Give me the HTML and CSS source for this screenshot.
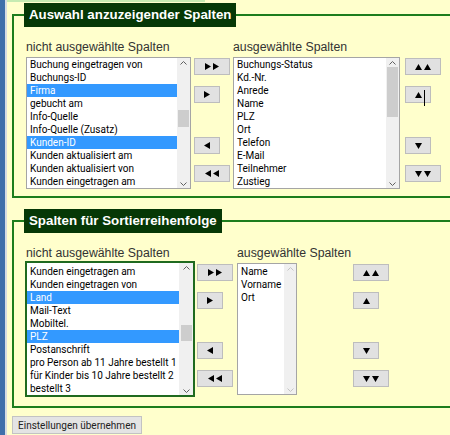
FILE: index.html
```html
<!DOCTYPE html>
<html>
<head>
<meta charset="utf-8">
<title>Spaltenauswahl</title>
<link rel="stylesheet" href="styles.css">
</head>
<body>
<div class="topband"></div>

<fieldset class="box">
	<legend>Auswahl anzuzeigender Spalten</legend>
	<div class="grid g1">
		<div class="lbl">nicht ausgewählte Spalten</div>
		<div></div>
		<div class="lbl">ausgewählte Spalten</div>
		<div></div>

		<div class="list l1">
			<div class="opts">
				<div class="opt">Buchung eingetragen von</div>
				<div class="opt">Buchungs-ID</div>
				<div class="opt sel">Firma</div>
				<div class="opt">gebucht am</div>
				<div class="opt">Info-Quelle</div>
				<div class="opt">Info-Quelle (Zusatz)</div>
				<div class="opt sel">Kunden-ID</div>
				<div class="opt">Kunden aktualisiert am</div>
				<div class="opt">Kunden aktualisiert von</div>
				<div class="opt">Kunden eingetragen am</div>
			</div>
			<div class="sb">
				<div class="arr"><svg width="7" height="4" viewBox="0 0 7 4"><polyline points="0.5,3.5 3.5,0.5 6.5,3.5"/></svg></div>
				<div class="track"><div class="thumb t1"></div></div>
				<div class="arr"><svg width="7" height="4" viewBox="0 0 7 4"><polyline points="0.5,0.5 3.5,3.5 6.5,0.5"/></svg></div>
			</div>
		</div>
		<div class="btns b1">
			<button class="btn d"><svg width="15" height="7" viewBox="0 0 15 7"><path d="M0 0L6 3.5L0 7ZM8 0L14 3.5L8 7Z"/></svg></button>
			<button class="btn s"><svg width="6" height="7" viewBox="0 0 6 7"><path d="M0 0L6 3.5L0 7Z"/></svg></button>
			<button class="btn s gap"><svg width="6" height="7" viewBox="0 0 6 7"><path d="M6 0L0 3.5L6 7Z"/></svg></button>
			<button class="btn d"><svg width="15" height="7" viewBox="0 0 15 7"><path d="M6 0L0 3.5L6 7ZM14 0L8 3.5L14 7Z"/></svg></button>
		</div>
		<div class="list l2">
			<div class="opts">
				<div class="opt">Buchungs-Status</div>
				<div class="opt">Kd.-Nr.</div>
				<div class="opt">Anrede</div>
				<div class="opt">Name</div>
				<div class="opt">PLZ</div>
				<div class="opt">Ort</div>
				<div class="opt">Telefon</div>
				<div class="opt">E-Mail</div>
				<div class="opt">Teilnehmer</div>
				<div class="opt">Zustieg</div>
			</div>
			<div class="sb">
				<div class="arr"><svg width="7" height="4" viewBox="0 0 7 4"><polyline points="0.5,3.5 3.5,0.5 6.5,3.5"/></svg></div>
				<div class="track"><div class="thumb t2"></div></div>
				<div class="arr"><svg width="7" height="4" viewBox="0 0 7 4"><polyline points="0.5,0.5 3.5,3.5 6.5,0.5"/></svg></div>
			</div>
		</div>
		<div class="btns b1">
			<button class="btn d"><svg width="16" height="6" viewBox="0 0 16 6"><path d="M0 6L3.5 0L7 6ZM9 6L12.5 0L16 6Z"/></svg></button>
			<button class="btn s"><svg width="7" height="6" viewBox="0 0 7 6"><path d="M0 6L3.5 0L7 6Z"/></svg></button>
			<button class="btn s gap"><svg width="7" height="6" viewBox="0 0 7 6"><path d="M0 0L3.5 6L7 0Z"/></svg></button>
			<button class="btn d"><svg width="16" height="6" viewBox="0 0 16 6"><path d="M0 0L3.5 6L7 0ZM9 0L12.5 6L16 0Z"/></svg></button>
		</div>
	</div>
</fieldset>

<fieldset class="box second">
	<legend>Spalten für Sortierreihenfolge</legend>
	<div class="grid g2">
		<div class="lbl">nicht ausgewählte Spalten</div>
		<div></div>
		<div class="lbl">ausgewählte Spalten</div>
		<div></div>

		<div class="list l3">
			<div class="opts">
				<div class="opt">Kunden eingetragen am</div>
				<div class="opt">Kunden eingetragen von</div>
				<div class="opt sel">Land</div>
				<div class="opt">Mail-Text</div>
				<div class="opt">Mobiltel.</div>
				<div class="opt sel">PLZ</div>
				<div class="opt">Postanschrift</div>
				<div class="opt">pro Person ab 11 Jahre bestellt 1</div>
				<div class="opt">für Kinder bis 10 Jahre bestellt 2</div>
				<div class="opt">bestellt 3</div>
			</div>
			<div class="sb">
				<div class="arr"><svg width="7" height="4" viewBox="0 0 7 4"><polyline points="0.5,3.5 3.5,0.5 6.5,3.5"/></svg></div>
				<div class="track"><div class="thumb t3"></div></div>
				<div class="arr"><svg width="7" height="4" viewBox="0 0 7 4"><polyline points="0.5,0.5 3.5,3.5 6.5,0.5"/></svg></div>
			</div>
		</div>
		<div class="btns b2">
			<button class="btn d"><svg width="15" height="7" viewBox="0 0 15 7"><path d="M0 0L6 3.5L0 7ZM8 0L14 3.5L8 7Z"/></svg></button>
			<button class="btn s"><svg width="6" height="7" viewBox="0 0 6 7"><path d="M0 0L6 3.5L0 7Z"/></svg></button>
			<button class="btn s gap"><svg width="6" height="7" viewBox="0 0 6 7"><path d="M6 0L0 3.5L6 7Z"/></svg></button>
			<button class="btn d"><svg width="15" height="7" viewBox="0 0 15 7"><path d="M6 0L0 3.5L6 7ZM14 0L8 3.5L14 7Z"/></svg></button>
		</div>
		<div class="list l4">
			<div class="opts">
				<div class="opt">Name</div>
				<div class="opt">Vorname</div>
				<div class="opt">Ort</div>
			</div>
			<div class="sb off">
				<div class="arr"><svg width="7" height="4" viewBox="0 0 7 4"><polyline points="0.5,3.5 3.5,0.5 6.5,3.5"/></svg></div>
				<div class="track"></div>
				<div class="arr"><svg width="7" height="4" viewBox="0 0 7 4"><polyline points="0.5,0.5 3.5,3.5 6.5,0.5"/></svg></div>
			</div>
		</div>
		<div class="btns b2">
			<button class="btn d"><svg width="16" height="6" viewBox="0 0 16 6"><path d="M0 6L3.5 0L7 6ZM9 6L12.5 0L16 6Z"/></svg></button>
			<button class="btn s"><svg width="7" height="6" viewBox="0 0 7 6"><path d="M0 6L3.5 0L7 6Z"/></svg></button>
			<button class="btn s gap"><svg width="7" height="6" viewBox="0 0 7 6"><path d="M0 0L3.5 6L7 0Z"/></svg></button>
			<button class="btn d"><svg width="16" height="6" viewBox="0 0 16 6"><path d="M0 0L3.5 6L7 0ZM9 0L12.5 6L16 0Z"/></svg></button>
		</div>
	</div>
</fieldset>

<button class="submit">Einstellungen übernehmen</button>

<div class="cursor"></div>
</body>
</html>
```

FILE: styles.css
```css
html {
	overflow: hidden;
	background: #ffffcc;
}

body {
	margin: 0;
	padding: 0 0 0 12px;
	min-height: 435px;
	position: relative;
	font-family: "Liberation Sans", Arial, sans-serif;
	background: linear-gradient(to right, #3f70aa 0, #3f70aa 5px, #d6dde2 5px, #d6dde2 7px, #ffffcc 7px);
}

.topband {
	height: 2px;
	width: 198px;
	margin-left: -5px;
	background: #c6ebb2;
}

/* the frame runs on past the right window edge, so no right border */
.box {
	margin: 1px 0 0 0;
	padding: 13px 0 7px 12px;
	min-width: 0;
	box-sizing: border-box;
	width: 438px;
	border: 2px solid #1d7d1d;
	border-right: none;
}

.box.second {
	margin-top: 11px;
	padding-bottom: 9px;
}

.box legend {
	margin-left: -2px;
	padding: 4px 5px;
	background: #063806;
	color: #fff;
	font: bold 13.3px/16px "Liberation Sans", Arial, sans-serif;
}

.grid {
	display: grid;
	align-items: start;
}

.g1 {
	grid-template-columns: 168px 39px 172px 40px;
}

.g2 {
	grid-template-columns: 171px 40px 116px 40px;
}

.lbl {
	font-size: 12.3px;
	line-height: 14px;
	color: #333;
	white-space: nowrap;
	margin-bottom: 3px;
}

.g2 .lbl {
	margin-bottom: 1px;
}

/* listboxes */
.list {
	display: flex;
	box-sizing: border-box;
	border: 1px solid #a5a5a5;
	background: #fff;
	overflow: hidden;
}

.l1 {
	width: 165px;
	height: 132px;
}

.l2 {
	width: 167px;
	height: 132px;
}

.l3 {
	width: 170px;
	height: 136px;
	margin-left: -1px;
	border: 2px solid #1f6a1f;
}

.l4 {
	width: 60px;
	height: 132px;
	margin-top: 2px;
}

.opts {
	flex: 1;
	min-width: 0;
}

.l3 .opts {
	padding-top: 2px;
}

.l4 .opts {
	padding-top: 1px;
}

.opt {
	height: 13px;
	line-height: 13px;
	padding-left: 3px;
	font-family: Roboto, "Liberation Sans", sans-serif;
	font-size: 10px;
	color: #000;
	white-space: nowrap;
	overflow: hidden;
}

.opt.sel {
	background: #3399ff;
	color: #fff;
}

/* scrollbars */
.sb {
	width: 13px;
	background: #f0f0f0;
	display: flex;
	flex-direction: column;
}

.l3 .sb {
	width: 14px;
}

.sb.off {
	width: 12px;
}

.arr {
	height: 9px;
	display: flex;
	align-items: center;
	justify-content: center;
}

.arr polyline {
	fill: none;
	stroke: #606060;
	stroke-width: 1;
}

.sb.off .arr polyline {
	stroke: #c4c4c4;
}

.track {
	flex: 1;
	display: flex;
	flex-direction: column;
	align-items: center;
}

.thumb {
	width: 11px;
	background: #cdcdcd;
}

.t1 {
	margin-top: 43px;
	height: 17px;
}

.t2 {
	margin-top: 0;
	height: 50px;
}

.t3 {
	margin-top: 53px;
	height: 16px;
}

/* arrow buttons */
.btns {
	display: flex;
	flex-direction: column;
	align-items: flex-start;
}

.b1 {
	padding-top: 1px;
}

.b2 {
	padding-top: 3px;
}

.btn {
	height: 17px;
	padding: 0;
	margin: 0;
	box-sizing: border-box;
	border: 1px solid #bdbdbd;
	background: #e1e1e1;
	display: flex;
	align-items: center;
	justify-content: center;
}

.btn.s {
	width: 26px;
}

.btn.d {
	width: 36px;
}

.btns .btn + .btn {
	margin-top: 11px;
}

.b1 .btn.gap {
	margin-top: 34px;
}

.b2 .btn.gap {
	margin-top: 33px;
}

.btn svg path {
	fill: #000;
}

.submit {
	display: block;
	margin: 8px 0 0 0;
	width: 130px;
	height: 18px;
	padding: 0;
	box-sizing: border-box;
	border: 1px solid #c3c3c3;
	background: #e4e4e4;
	color: #222;
	font-family: Roboto, "Liberation Sans", sans-serif;
	font-size: 10px;
	white-space: nowrap;
}

.cursor {
	position: absolute;
	left: 424px;
	top: 90px;
	width: 1px;
	height: 16px;
	background: #000;
}
```
